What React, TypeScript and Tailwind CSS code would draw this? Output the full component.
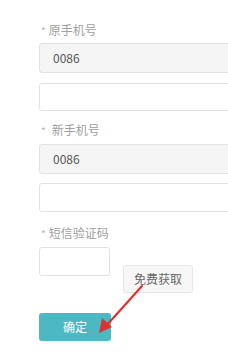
export default function App() {
  const font = { fontFamily: '"Noto Sans CJK SC", "Noto Sans", sans-serif' };
  return (
    <div className="relative w-[228px] h-[355px] overflow-hidden bg-white" style={font}>
      <div className="flex flex-col pl-[39px] pt-[22px]">
        <div className="h-[16px] flex items-center text-[12px] text-[#a0a0a0] pl-[2px]">
          <span className="mr-[3px] text-[10px] text-[#b5b5b5]">*</span>原手机号
        </div>
        <div className="mt-[5px] h-[30px] w-[220px] rounded-[3px] border border-[#e2e2e2] bg-[#f5f5f5] flex items-center pl-[13px] text-[12px] text-[#555]">
          0086
        </div>
        <div className="mt-[10px] h-[28px] w-[220px] rounded-[3px] border border-[#e2e2e2] bg-white" />

        <div className="mt-[11px] h-[16px] flex items-center text-[12px] text-[#a0a0a0] pl-[2px]">
          <span className="mr-[6px] text-[10px] text-[#b5b5b5]">*</span>新手机号
        </div>
        <div className="mt-[6px] h-[30px] w-[220px] rounded-[3px] border border-[#e2e2e2] bg-[#f5f5f5] flex items-center pl-[13px] text-[12px] text-[#555]">
          0086
        </div>
        <div className="mt-[9px] h-[29px] w-[220px] rounded-[3px] border border-[#e2e2e2] bg-white" />

        <div className="mt-[13px] h-[16px] flex items-center text-[12px] text-[#a0a0a0] pl-[2px]">
          <span className="mr-[3px] text-[10px] text-[#b5b5b5]">*</span>短信验证码
        </div>
        <div className="mt-[6px] flex items-start">
          <div className="h-[29px] w-[71px] rounded-[3px] border border-[#e2e2e2] bg-white" />
          <div className="ml-[13px] mt-[18px] h-[28px] w-[70px] rounded-[3px] border border-[#e6e6e6] bg-[#f7f7f7] flex items-center justify-center text-[12px] text-[#666]">
            免费获取
          </div>
        </div>
        <div className="mt-[20px] h-[28px] w-[72px] rounded-[3px] bg-[#4cb8c1] flex items-center justify-center text-[12px] text-white">
          确定
        </div>
      </div>
      <svg className="absolute left-0 top-0" width="228" height="355" viewBox="0 0 228 355">
        <line x1="142" y1="286" x2="106" y2="326" stroke="#e0312f" strokeWidth="2.2" strokeLinecap="round" />
        <polygon points="99,333 102,318 112,327" fill="#e0312f" />
      </svg>
    </div>
  );
}
